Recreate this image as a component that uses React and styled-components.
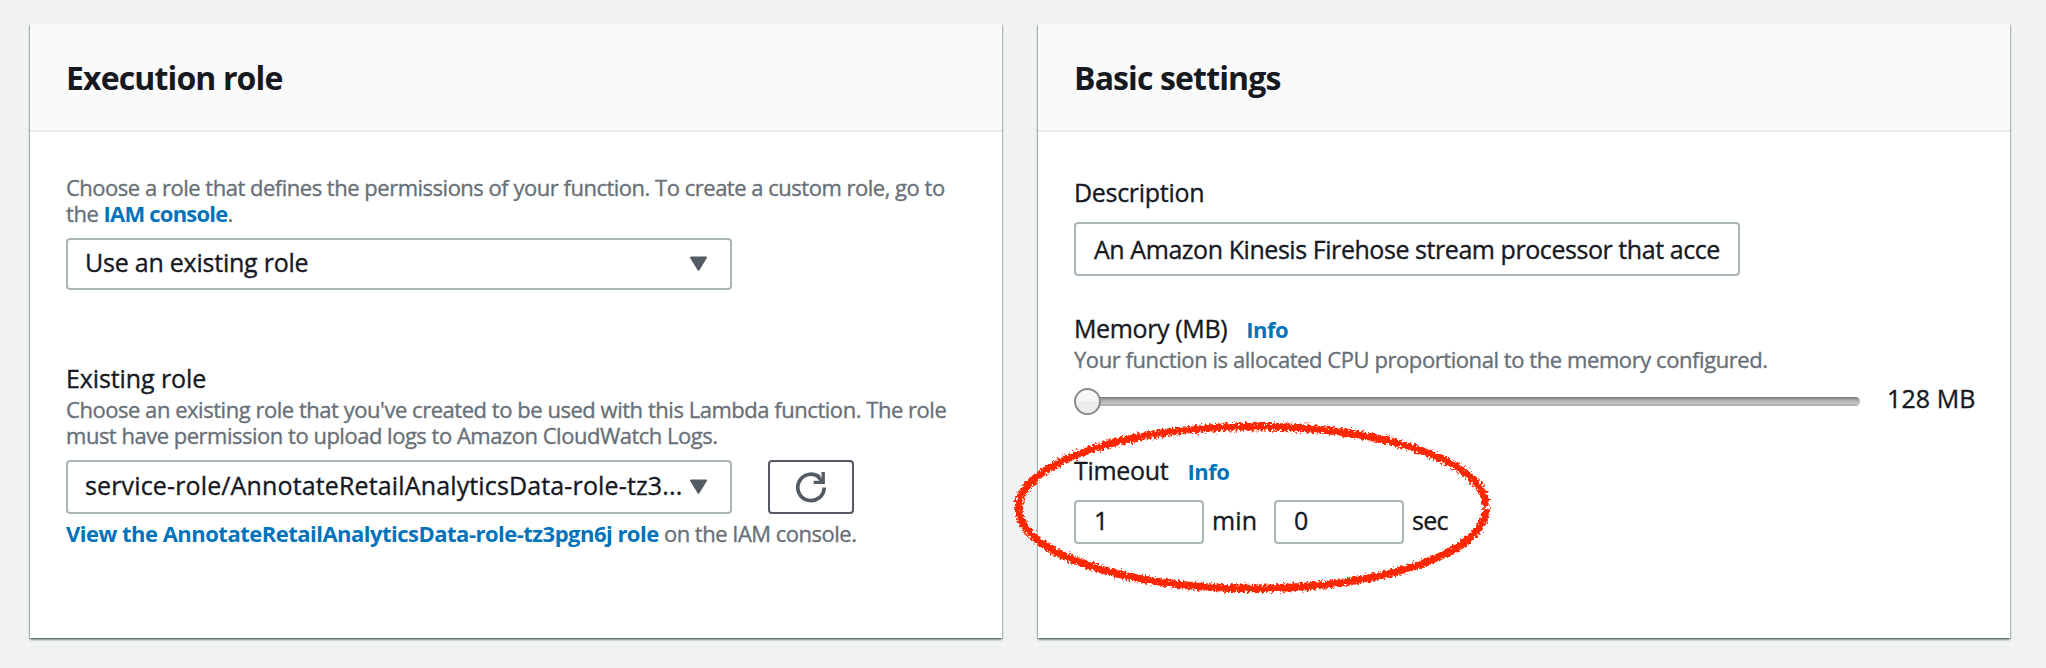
import React from "react";
import styled, { createGlobalStyle } from "styled-components";

const GlobalStyle = createGlobalStyle`
  * { box-sizing: border-box; }
  html, body { margin: 0; background: #f1f3f3; }
  body {
    font-family: "Open Sans", "Noto Sans", sans-serif;
    color: #16191f;
    -webkit-text-stroke: 0.35px currentColor;
  }
`;

const Page = styled.main`
  position: relative;
  display: grid;
  grid-template-columns: 972px 972px;
  column-gap: 36px;
  align-content: start;
  width: 2046px;
  height: 668px;
  padding: 24px 0 0 30px;
  overflow: hidden;
  background: #f1f3f3;
`;

const Card = styled.section`
  height: 614px;
  background: #fff;
  box-shadow: 0 2px 2px 0 rgba(0, 28, 36, 0.42), 1px 1px 1px 0 rgba(0, 28, 36, 0.16),
    -1px 1px 1px 0 rgba(0, 28, 36, 0.2);
`;

const CardHeader = styled.header`
  height: 108px;
  padding: 34px 36px 0;
  border-bottom: 2px solid #eaeded;
  background: #fafafa;
`;

const CardTitle = styled.h2`
  margin: 0;
  font-size: 32px;
  line-height: 40px;
  font-weight: 700;
  letter-spacing: -0.87px;
  -webkit-text-stroke-width: 0;
`;

const CardBody = styled.div`
  display: flex;
  flex-direction: column;
  padding: ${(p) => p.$top}px 36px 0;
`;

const Field = styled.div`
  display: flex;
  flex-direction: column;
  margin-top: ${(p) => p.$gap || 0}px;
`;

const Tracked = styled.span`
  letter-spacing: ${(p) => p.$track}px;
`;

const Label = styled.div`
  display: flex;
  align-items: baseline;
  height: 30px;
  font-size: 25px;
  line-height: 30px;
`;

const Hint = styled.p`
  margin: ${(p) => p.$gap || 0}px 0 0;
  font-size: 22px;
  line-height: 26px;
  color: #687078;
  white-space: nowrap;
`;

const Link = styled.a`
  color: #0073bb;
  font-size: 22px;
  font-weight: 700;
  letter-spacing: ${(p) => p.$track}px;
  -webkit-text-stroke-width: 0;
  cursor: pointer;
`;

const InfoLink = styled(Link)`
  margin-left: ${(p) => p.$gap}px;
`;

const ControlRow = styled.div`
  display: flex;
  margin-top: ${(p) => p.$gap}px;
`;

const Box = styled.div`
  display: flex;
  align-items: center;
  width: ${(p) => p.$width}px;
  height: ${(p) => p.$height}px;
  padding: 0 18px ${(p) => p.$lift}px;
  border: 2px solid #aab7b8;
  border-radius: 4px;
  background: #fff;
  font-size: 25px;
  line-height: 30px;
  white-space: nowrap;
`;

const Select = styled(Box)`
  justify-content: space-between;
  padding-left: 17px;
  padding-right: 22px;
`;

const Arrow = styled.svg`
  flex: none;
  width: 19px;
  height: 16px;
  margin-top: ${(p) => p.$drop}px;
`;

const IconButton = styled.button`
  display: flex;
  align-items: center;
  justify-content: center;
  width: 86px;
  height: 54px;
  margin-left: 36px;
  padding: 0;
  border: 2px solid #545b64;
  border-radius: 4px;
  background: #fff;
`;

const SliderRow = styled.div`
  display: flex;
  align-items: center;
  height: 34px;
  margin-top: 12px;
`;

const Track = styled.div`
  flex: none;
  display: flex;
  align-items: center;
  width: 785px;
  height: 9px;
  margin-left: 1px;
  border-radius: 5px;
  background: linear-gradient(#777 0, #999 22%, #b5b5b5 45%, #c0c0c0 75%, #aaa 100%);
`;

const Thumb = styled.div`
  flex: none;
  width: 27px;
  height: 27px;
  margin-left: -1px;
  border: 2px solid #8a8a8a;
  border-radius: 50%;
  background: linear-gradient(#fafafa 0, #f4f4f4 50%, #eaeaea 51%, #efefef 100%);
`;

const SliderValue = styled.span`
  margin: 0 0 6px 27px;
  font-size: 25px;
  line-height: 30px;
  letter-spacing: 0.1px;
  white-space: nowrap;
`;

const TimeRow = styled.div`
  display: flex;
  align-items: center;
  margin-top: 15px;
`;

const Unit = styled.span`
  width: ${(p) => p.$width}px;
  padding: 0 0 4px 8px;
  font-size: 25px;
  line-height: 30px;
  letter-spacing: ${(p) => p.$track}px;
`;

const Marker = styled.svg`
  position: absolute;
  left: 1000px;
  top: 410px;
  pointer-events: none;
`;

const DownArrow = ({ drop = 3 }) => (
  <Arrow viewBox="0 0 19 16" $drop={drop}>
    <path d="M2 1.5h15L9.5 13.8Z" fill="#545b64" stroke="#545b64" strokeWidth="2" strokeLinejoin="round" />
  </Arrow>
);

const RefreshIcon = () => (
  <svg width="32" height="32" viewBox="0 0 32 32" fill="none" stroke="#545b64">
    <path d="M29.2 16.4A13.2 13.2 0 1 1 24.6 6.4" strokeWidth="3.7" />
    <path d="M28.2 1v10.4H18.7" strokeWidth="3.4" />
    <path d="M22.5 5.5L27.5 10.5" strokeWidth="3.4" />
  </svg>
);

const HandDrawnEllipse = () => (
  <Marker width="504" height="194" viewBox="0 0 504 194">
    <defs>
      <filter id="chalk" x="-5%" y="-10%" width="110%" height="120%">
        <feTurbulence type="fractalNoise" baseFrequency="0.42" numOctaves="3" seed="7" result="noise" />
        <feDisplacementMap in="SourceGraphic" in2="noise" scale="8" xChannelSelector="R" yChannelSelector="G" />
      </filter>
    </defs>
    <path
      d="M486.2 96C484 50 382 16.5 252 16.5C124 16.5 18.5 54 18.5 98C18.5 143 124 178.5 252 178.5C382 178.5 486 143 486.2 98.3"
      fill="none"
      stroke="#ff2600"
      strokeWidth="7.6"
      filter="url(#chalk)"
    />
  </Marker>
);

const Panel = ({ title, top, children }) => (
  <Card>
    <CardHeader>
      <CardTitle>{title}</CardTitle>
    </CardHeader>
    <CardBody $top={top}>{children}</CardBody>
  </Card>
);

export default function App() {
  return (
    <>
      <GlobalStyle />
      <Page>
        <Panel title="Execution role" top={42}>
          <Field>
            <Hint>
              <Tracked $track={-0.49}>
                Choose a role that defines the permissions of your function. To create a custom role, go to
              </Tracked>
              <br />
              <Tracked $track={-0.45}>the </Tracked>
              <Link $track={-0.8}>IAM console</Link>.
            </Hint>
            <ControlRow $gap={12}>
              <Select $width={666} $height={52} $lift={4}>
                <Tracked $track={-0.23}>Use an existing role</Tracked>
                <DownArrow />
              </Select>
            </ControlRow>
          </Field>
          <Field $gap={73}>
            <Label>
              <Tracked $track={-0.1}>Existing role</Tracked>
            </Label>
            <Hint $gap={3}>
              <Tracked $track={-0.465}>
                Choose an existing role that you've created to be used with this Lambda function. The role
              </Tracked>
              <br />
              <Tracked $track={-0.49}>must have permission to upload logs to Amazon CloudWatch Logs.</Tracked>
            </Hint>
            <ControlRow $gap={12}>
              <Select $width={666} $height={54} $lift={5}>
                <Tracked $track={0.14}>service-role/AnnotateRetailAnalyticsData-role-tz3...</Tracked>
                <DownArrow drop={5} />
              </Select>
              <IconButton aria-label="Refresh">
                <RefreshIcon />
              </IconButton>
            </ControlRow>
            <Hint $gap={6}>
              <Link $track={-0.51}>View the AnnotateRetailAnalyticsData-role-tz3pgn6j role</Link>
              <Tracked $track={-0.5}> on the IAM console.</Tracked>
            </Hint>
          </Field>
        </Panel>

        <Panel title="Basic settings" top={45}>
          <Field>
            <Label>
              <Tracked $track={-0.3}>Description</Tracked>
            </Label>
            <ControlRow $gap={15}>
              <Box $width={666} $height={54} $lift={1}>
                <Tracked $track={-0.44}>An Amazon Kinesis Firehose stream processor that acce</Tracked>
              </Box>
            </ControlRow>
          </Field>
          <Field $gap={37}>
            <Label>
              <Tracked $track={-0.37}>Memory (MB)</Tracked>
              <InfoLink $gap={19} $track={-0.5}>Info</InfoLink>
            </Label>
            <Hint $gap={3}>
              <Tracked $track={-0.43}>Your function is allocated CPU proportional to the memory configured.</Tracked>
            </Hint>
            <SliderRow>
              <Track>
                <Thumb />
              </Track>
              <SliderValue>128 MB</SliderValue>
            </SliderRow>
          </Field>
          <Field $gap={37}>
            <Label>
              <Tracked $track={-0.3}>Timeout</Tracked>
              <InfoLink $gap={19} $track={-0.5}>Info</InfoLink>
            </Label>
            <TimeRow>
              <Box $width={130} $height={44} $lift={4}>1</Box>
              <Unit $width={70} $track={0.2}>min</Unit>
              <Box $width={130} $height={44} $lift={4}>0</Box>
              <Unit $width={60} $track={-0.7}>sec</Unit>
            </TimeRow>
          </Field>
        </Panel>
        <HandDrawnEllipse />
      </Page>
    </>
  );
}
